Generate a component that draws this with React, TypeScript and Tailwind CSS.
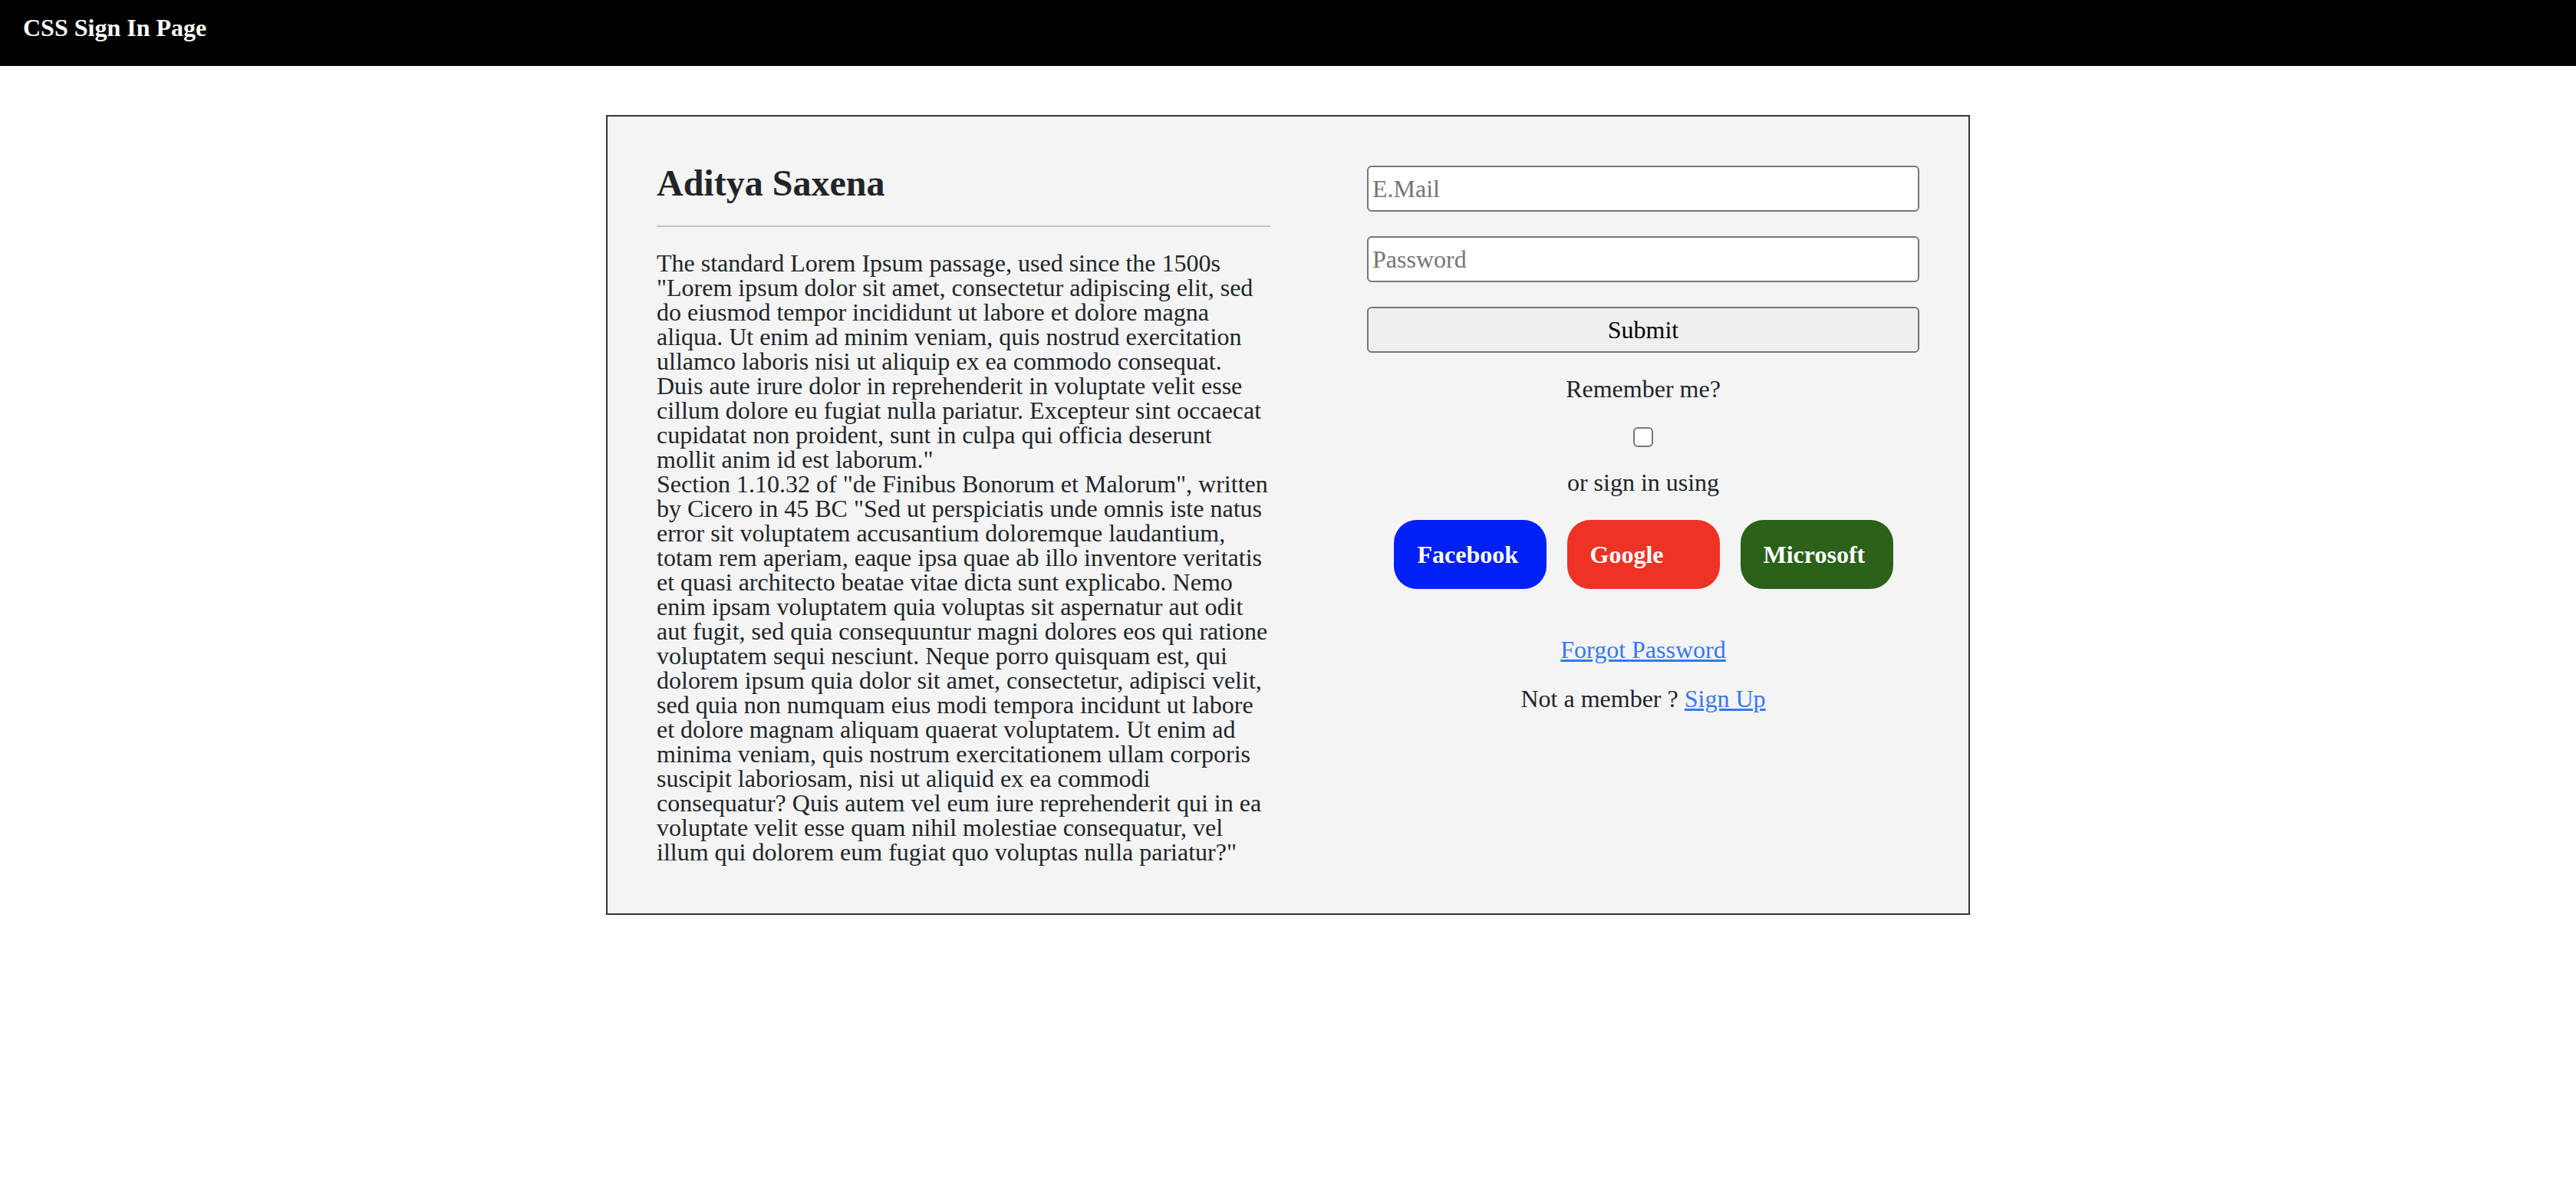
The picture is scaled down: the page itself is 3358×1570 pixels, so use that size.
import React from "react";

const para1 =
  "The standard Lorem Ipsum passage, used since the 1500s \"Lorem ipsum dolor sit amet, consectetur adipiscing elit, sed do eiusmod tempor incididunt ut labore et dolore magna aliqua. Ut enim ad minim veniam, quis nostrud exercitation ullamco laboris nisi ut aliquip ex ea commodo consequat. Duis aute irure dolor in reprehenderit in voluptate velit esse cillum dolore eu fugiat nulla pariatur. Excepteur sint occaecat cupidatat non proident, sunt in culpa qui officia deserunt mollit anim id est laborum.\"";
const para2 =
  "Section 1.10.32 of \"de Finibus Bonorum et Malorum\", written by Cicero in 45 BC \"Sed ut perspiciatis unde omnis iste natus error sit voluptatem accusantium doloremque laudantium, totam rem aperiam, eaque ipsa quae ab illo inventore veritatis et quasi architecto beatae vitae dicta sunt explicabo. Nemo enim ipsam voluptatem quia voluptas sit aspernatur aut odit aut fugit, sed quia consequuntur magni dolores eos qui ratione voluptatem sequi nesciunt. Neque porro quisquam est, qui dolorem ipsum quia dolor sit amet, consectetur, adipisci velit, sed quia non numquam eius modi tempora incidunt ut labore et dolore magnam aliquam quaerat voluptatem. Ut enim ad minima veniam, quis nostrum exercitationem ullam corporis suscipit laboriosam, nisi ut aliquid ex ea commodi consequatur? Quis autem vel eum iure reprehenderit qui in ea voluptate velit esse quam nihil molestiae consequatur, vel illum qui dolorem eum fugiat quo voluptas nulla pariatur?\"";

export default function App() {
  return (
    <div className="min-h-screen bg-white font-['Liberation_Serif',serif] text-[#212529]">
      <header className="h-[86px] bg-black pl-[30px] pt-[20px]">
        <h1 className="text-[32px] leading-[32px] font-bold text-white">CSS Sign In Page</h1>
      </header>

      <div className="mx-auto mt-[64px] w-[1778px] border-2 border-[#333] bg-[#f4f4f4] p-[64px]">
        <div className="flex">
          <div className="w-[800px]">
            <h2 className="text-[48px] leading-[46px] font-bold text-[#212529]">Aditya Saxena</h2>
            <div className="mt-[32px] h-[2px] bg-[#c4c4c4]" />
            <p className="mt-[31px] text-[32px] leading-[32px] text-[#212529]">
              {para1}
              <br />
              {para2}
            </p>
          </div>

          <div className="ml-[126px] flex flex-1 flex-col items-center">
            <input
              type="text"
              placeholder="E.Mail"
              className="h-[60px] w-full rounded-[6px] border-2 border-[#767676] bg-white px-[5px] text-[32px] text-black placeholder:text-[#757575] outline-none"
            />
            <input
              type="password"
              placeholder="Password"
              className="mt-[32px] h-[60px] w-full rounded-[6px] border-2 border-[#767676] bg-white px-[5px] text-[32px] text-black placeholder:text-[#757575] outline-none"
            />
            <button className="mt-[32px] h-[60px] w-full rounded-[6px] border-2 border-[#767676] bg-[#efefef] text-[32px] text-black">
              Submit
            </button>
            <div className="mt-[31px] text-[32px] leading-[32px]">Remember me?</div>
            <div className="mt-[34px] h-[26px] w-[26px] rounded-[6px] border-2 border-[#767676] bg-white" />
            <div className="mt-[30px] text-[32px] leading-[32px]">or sign in using</div>
            <div className="mt-[33px] flex gap-[27px]">
              <button className="flex h-[90px] w-[199px] items-center rounded-[30px] bg-[#0020f8] pl-[31px] text-[32px] font-bold text-white">
                Facebook
              </button>
              <button className="flex h-[90px] w-[199px] items-center rounded-[30px] bg-[#ee3224] pl-[30px] text-[32px] font-bold text-white">
                Google
              </button>
              <button className="flex h-[90px] w-[199px] items-center rounded-[30px] bg-[#2b6118] pl-[30px] text-[32px] font-bold text-white">
                Microsoft
              </button>
            </div>
            <a href="#" className="mt-[63px] text-[32px] leading-[32px] text-[#3478f6] underline">
              Forgot Password
            </a>
            <div className="mt-[32px] text-[32px] leading-[32px]">
              Not a member ?{" "}
              <a href="#" className="text-[#3478f6] underline">
                Sign Up
              </a>
            </div>
          </div>
        </div>
      </div>
    </div>
  );
}
